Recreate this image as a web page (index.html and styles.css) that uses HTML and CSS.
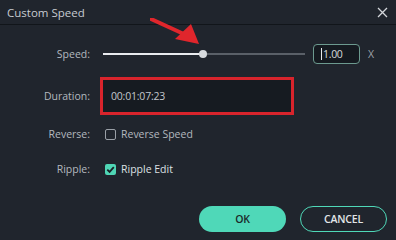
FILE: index.html
```html
<!DOCTYPE html>
<html>
<head>
  <meta charset="utf-8">
  <title>Custom Speed</title>
  <link rel="stylesheet" href="styles.css">
</head>
<body>
  <div class="dialog">
    <!-- Title bar -->
    <header class="titlebar">
      <span class="title">Custom Speed</span>
      <svg class="close" width="11" height="11" viewBox="0 0 11 11">
        <path d="M1 1 L10 10 M10 1 L1 10" stroke="#d4d7db" stroke-width="1.3" fill="none"/>
      </svg>
    </header>

    <div class="body">
      <!-- Speed -->
      <div class="row row-speed">
        <div class="label">Speed:</div>
        <div class="control">
          <div class="slider">
            <div class="slider-fill"></div>
            <div class="slider-knob"></div>
          </div>
          <div class="speed-input"><span class="caret"></span>1.00</div>
          <span class="unit">X</span>
        </div>
      </div>

      <!-- Duration -->
      <div class="row row-duration">
        <div class="label">Duration:</div>
        <div class="control">
          <div class="duration-box">00:01:07:23</div>
        </div>
      </div>

      <!-- Reverse -->
      <div class="row row-reverse">
        <div class="label">Reverse:</div>
        <div class="control">
          <span class="checkbox"></span>
          <span class="check-text">Reverse Speed</span>
        </div>
      </div>

      <!-- Ripple -->
      <div class="row row-ripple">
        <div class="label">Ripple:</div>
        <div class="control">
          <span class="checkbox checked">
            <svg width="11" height="11" viewBox="0 0 11 11">
              <path d="M2.3 5.6 L4.6 7.9 L8.8 3.2" stroke="#1a2027" stroke-width="1.8" fill="none"/>
            </svg>
          </span>
          <span class="check-text bright">Ripple Edit</span>
        </div>
      </div>

      <div class="actions">
        <button class="btn btn-ok">OK</button>
        <button class="btn btn-cancel">CANCEL</button>
      </div>
    </div>

    <!-- annotation arrow -->
    <svg class="arrow" width="60" height="36" viewBox="0 0 60 36">
      <path d="M1 1 L36 17" stroke="#e0262c" stroke-width="4" stroke-linecap="round"/>
      <path d="M49 26 L25 21 L41 6 Z" fill="#e0262c"/>
    </svg>
  </div>
</body>
</html>
```

FILE: styles.css
```css
body {
  margin: 0;
  padding: 0;
  background: #20252d;
  font-family: 'Open Sans', 'Liberation Sans', sans-serif;
  color: #b9bec5;
}

.dialog {
  position: relative;
  width: 396px;
  height: 240px;
  background: #20252d;
}

.titlebar {
  height: 24px;
  display: flex;
  align-items: center;
  justify-content: space-between;
  padding: 0 7px 0 7px;
  border-bottom: 1px solid #11151a;
}

.title {
  font-size: 11.5px;
  color: #c7cbd1;
}

.close {
  margin-right: 1px;
}

.body {
  padding-top: 19px;
}

.row {
  display: grid;
  grid-template-columns: 90px 1fr;
  column-gap: 10px;
  align-items: center;
}

.label {
  text-align: right;
  font-size: 10.5px;
  color: #b3b8bf;
}

.control {
  display: flex;
  align-items: center;
}

/* Speed */
.row-speed {
  height: 20px;
}

.slider {
  position: relative;
  width: 202px;
  height: 2px;
  margin-left: 3px;
  background: #5a6068;
}

.slider-fill {
  width: 100px;
  height: 2px;
  background: #e9ebee;
}

.slider-knob {
  position: absolute;
  left: 96px;
  top: -3px;
  width: 8px;
  height: 8px;
  border-radius: 50%;
  background: #d8dbdf;
}

.speed-input {
  display: flex;
  align-items: center;
  box-sizing: border-box;
  width: 47px;
  height: 20px;
  margin-left: 8px;
  padding-left: 7px;
  border: 1.5px solid #6c9a8f;
  border-radius: 4px;
  background: #151a20;
  font-size: 10.5px;
  color: #d6d9dd;
  letter-spacing: -0.3px;
}

.caret {
  width: 1px;
  height: 12px;
  background: #e6e8eb;
  margin-right: 1px;
}

.unit {
  margin-left: 8px;
  font-size: 10.5px;
  color: #9ea3aa;
}

/* Duration */
.row-duration {
  margin-top: 13px;
}

.duration-box {
  box-sizing: border-box;
  width: 194px;
  height: 38px;
  border: 3px solid #d8242c;
  background: #161b21;
  padding-left: 8px;
  display: flex;
  align-items: center;
  font-size: 10.5px;
  color: #c3c7cd;
  letter-spacing: -0.2px;
}

/* Checkboxes */
.row-reverse {
  margin-top: 12px;
  height: 14px;
}

.row-ripple {
  margin-top: 21px;
  height: 14px;
}

.checkbox {
  box-sizing: border-box;
  width: 11px;
  height: 11px;
  margin-left: 5px;
  border: 1px solid #9aa0a7;
  border-radius: 2px;
  display: flex;
}

.checkbox.checked {
  border: none;
  background: #4fd6b5;
}

.check-text {
  margin-left: 5px;
  font-size: 10.5px;
  color: #b3b8bf;
}

.check-text.bright {
  color: #dde0e4;
}

/* Buttons */
.actions {
  display: flex;
  justify-content: flex-end;
  gap: 14px;
  margin-top: 30px;
  padding-right: 9px;
}

.btn {
  width: 87px;
  height: 26px;
  border-radius: 13px;
  font-family: 'Open Sans', 'Liberation Sans', sans-serif;
  font-size: 10.5px;
  font-weight: 600;
  letter-spacing: -0.2px;
  cursor: pointer;
}

.btn-ok {
  background: #4fd8b8;
  border: none;
  color: #1b2a2a;
}

.btn-cancel {
  box-sizing: border-box;
  background: transparent;
  border: 1.5px solid #4fd8b8;
  color: #e2e5e8;
}

/* Annotation arrow over the slider */
.arrow {
  position: absolute;
  left: 150px;
  top: 18px;
}
```
